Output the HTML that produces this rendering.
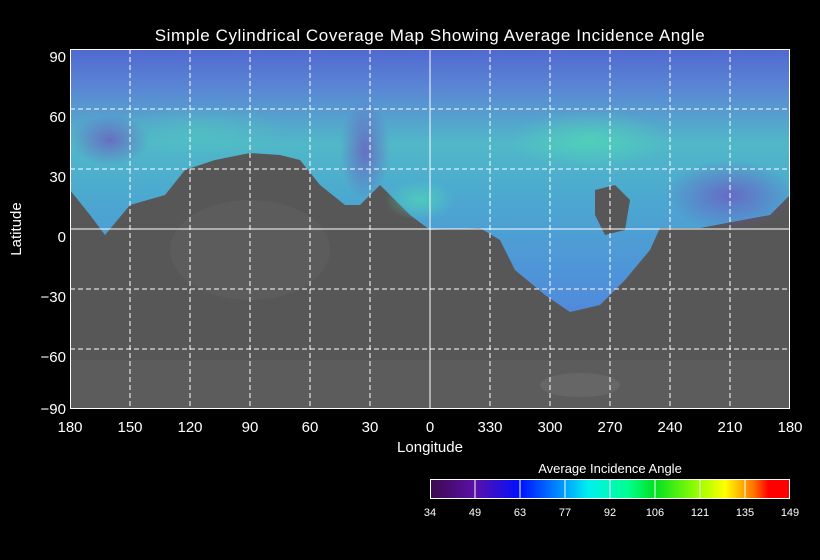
<!DOCTYPE html>
<html><head><meta charset="utf-8"><style>
html,body{margin:0;padding:0;background:#000;width:820px;height:560px;overflow:hidden}
body{font-family:"Liberation Sans",sans-serif;color:#fff}
</style></head><body>
<svg width="820" height="560" xmlns="http://www.w3.org/2000/svg" style="position:absolute;left:0;top:0">
<defs>
<linearGradient id="cov" x1="0" y1="49" x2="0" y2="320" gradientUnits="userSpaceOnUse">
<stop offset="0" stop-color="#5068d0"/>
<stop offset="0.15" stop-color="#5a88d4"/>
<stop offset="0.35" stop-color="#50b8c8"/>
<stop offset="0.55" stop-color="#4ca8d0"/>
<stop offset="1" stop-color="#5088dc"/>
</linearGradient>
<linearGradient id="cb" x1="430" x2="790" y1="0" y2="0" gradientUnits="userSpaceOnUse">
<stop offset="0" stop-color="#3c0a4c"/>
<stop offset="0.125" stop-color="#5a10a8"/>
<stop offset="0.25" stop-color="#0010ff"/>
<stop offset="0.375" stop-color="#00a0ff"/>
<stop offset="0.44" stop-color="#00f0f0"/>
<stop offset="0.55" stop-color="#00ff90"/>
<stop offset="0.625" stop-color="#00e020"/>
<stop offset="0.75" stop-color="#a0ff00"/>
<stop offset="0.82" stop-color="#ffff00"/>
<stop offset="0.9" stop-color="#ff7000"/>
<stop offset="0.94" stop-color="#ff0000"/>
<stop offset="1" stop-color="#ff0000"/>
</linearGradient>
<radialGradient id="pur"><stop offset="0" stop-color="#7050c0" stop-opacity="0.7"/><stop offset="1" stop-color="#7050c0" stop-opacity="0"/></radialGradient>
<radialGradient id="grn"><stop offset="0" stop-color="#50e0b0" stop-opacity="0.6"/><stop offset="1" stop-color="#50e0b0" stop-opacity="0"/></radialGradient>
</defs>
<rect x="70" y="49" width="720" height="360" fill="#575757"/>
<rect x="70" y="360" width="720" height="49" fill="#5c5c5c"/>
<ellipse cx="250" cy="250" rx="80" ry="50" fill="#5c5c5c"/>
<ellipse cx="580" cy="385" rx="40" ry="12" fill="#666"/>
<polygon fill="url(#cov)" points="70,49 790,49 790,195 770,215 700,228 660,228 650,250 625,280 600,305 570,312 545,295 515,270 500,240 480,228 430,230 410,215 380,185 360,205 345,205 320,185 300,160 280,155 250,153 215,160 185,170 165,195 130,205 105,235 90,215 70,190"/>
<ellipse cx="730" cy="195" rx="65" ry="35" fill="url(#pur)"/>
<ellipse cx="110" cy="140" rx="40" ry="25" fill="url(#pur)"/>
<ellipse cx="365" cy="150" rx="25" ry="50" fill="url(#pur)"/>
<ellipse cx="590" cy="140" rx="80" ry="30" fill="url(#grn)"/>
<ellipse cx="200" cy="130" rx="90" ry="25" fill="url(#grn)" opacity="0.5"/>
<ellipse cx="420" cy="200" rx="35" ry="20" fill="url(#grn)"/>
<polygon fill="#575757" points="595,190 615,185 630,200 625,230 605,235 595,215"/>
<g stroke="#fff" stroke-width="1" stroke-dasharray="5,3">
<line x1="130" y1="49" x2="130" y2="409"/><line x1="190" y1="49" x2="190" y2="409"/>
<line x1="250" y1="49" x2="250" y2="409"/><line x1="310" y1="49" x2="310" y2="409"/>
<line x1="370" y1="49" x2="370" y2="409"/><line x1="490" y1="49" x2="490" y2="409"/>
<line x1="550" y1="49" x2="550" y2="409"/><line x1="610" y1="49" x2="610" y2="409"/>
<line x1="670" y1="49" x2="670" y2="409"/><line x1="730" y1="49" x2="730" y2="409"/>
<line x1="70" y1="109" x2="790" y2="109"/><line x1="70" y1="169" x2="790" y2="169"/>
<line x1="70" y1="289" x2="790" y2="289"/><line x1="70" y1="349" x2="790" y2="349"/>
</g>
<line x1="430" y1="49" x2="430" y2="409" stroke="#fff"/>
<line x1="70" y1="229" x2="790" y2="229" stroke="#fff"/>
<rect x="70.5" y="49.5" width="719" height="359" fill="none" stroke="#fff"/>
<g fill="#fff" font-family="Liberation Sans,sans-serif">
<text x="430" y="41" font-size="17" text-anchor="middle" letter-spacing="0.6">Simple Cylindrical Coverage Map Showing Average Incidence Angle</text>
<g font-size="15" text-anchor="end">
<text x="66" y="62">90</text><text x="66" y="122">60</text><text x="66" y="182">30</text>
<text x="66" y="242">0</text><text x="66" y="302">−30</text><text x="66" y="362">−60</text><text x="66" y="414">−90</text>
</g>
<g font-size="15" text-anchor="middle">
<text x="70" y="432">180</text><text x="130" y="432">150</text><text x="190" y="432">120</text>
<text x="250" y="432">90</text><text x="310" y="432">60</text><text x="370" y="432">30</text>
<text x="430" y="432">0</text><text x="490" y="432">330</text><text x="550" y="432">300</text>
<text x="610" y="432">270</text><text x="670" y="432">240</text><text x="730" y="432">210</text><text x="790" y="432">180</text>
<text x="430" y="452">Longitude</text>
<text x="610" y="473" font-size="13">Average Incidence Angle</text>
</g>
<text transform="translate(21,229) rotate(-90)" font-size="15" text-anchor="middle">Latitude</text>
<rect x="430.5" y="479.5" width="359" height="19" fill="url(#cb)" stroke="#fff"/>
<g stroke="#fff"><line x1="475" y1="480" x2="475" y2="499"/><line x1="520" y1="480" x2="520" y2="499"/><line x1="565" y1="480" x2="565" y2="499"/><line x1="610" y1="480" x2="610" y2="499"/><line x1="655" y1="480" x2="655" y2="499"/><line x1="700" y1="480" x2="700" y2="499"/><line x1="745" y1="480" x2="745" y2="499"/></g>
<g font-size="11" text-anchor="middle">
<text x="430" y="516">34</text><text x="475" y="516">49</text><text x="520" y="516">63</text><text x="565" y="516">77</text><text x="610" y="516">92</text><text x="655" y="516">106</text><text x="700" y="516">121</text><text x="745" y="516">135</text><text x="790" y="516">149</text>
</g>
</g>
</svg>
</body></html>
